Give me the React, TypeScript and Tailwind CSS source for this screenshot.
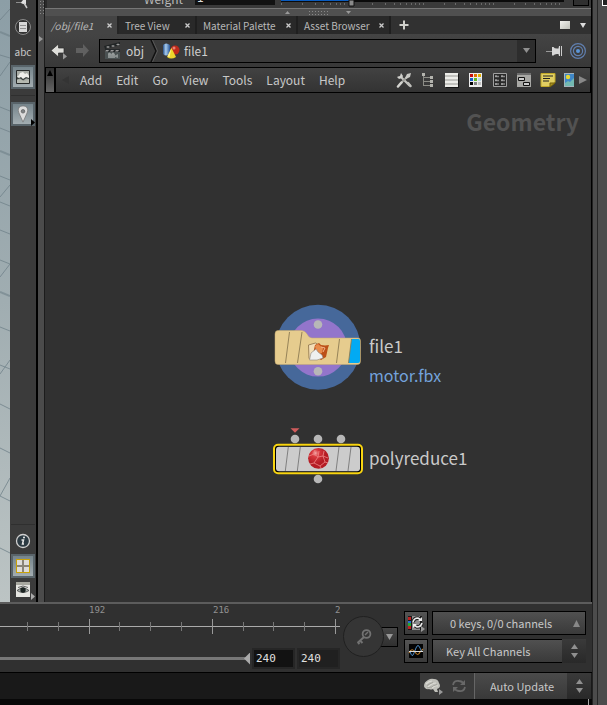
import type { ReactNode } from "react"
import { clsx } from "clsx"

const TABS = [
  { label: "/obj/file1", width: "w-[74px]" },
  { label: "Tree View", width: "w-[78px]" },
  { label: "Material Palette", width: "w-[101px]" },
  { label: "Asset Browser", width: "w-[93px]" },
]

const MENUS = ["Add", "Edit", "Go", "View", "Tools", "Layout", "Help"]

const swatches = ["#c81010", "#e07000", "#e0b000", "#1860c8", "#60b820", "#b8d8e8", "#000", "#808080", "#c0c0c0"]

const Caret = ({ dir, className = "fill-[#999]" }: { dir: "up" | "down" | "left" | "right"; className?: string }) => {
  const points = { up: "0,8 8,8 4,0", down: "0,0 8,0 4,8", left: "8,0 8,8 0,4", right: "0,0 8,4 0,8" }[dir]
  return (
    <svg viewBox="0 0 8 8" preserveAspectRatio="none" className={clsx("shrink-0", className)}>
      <polygon points={points} />
    </svg>
  )
}

const Stepper = () => (
  <span className="pointer-events-none absolute inset-y-0 right-0 flex w-6 flex-col items-center justify-center gap-1 bg-gradient-to-b from-[#3a3a3a] to-[#292929]">
    <Caret dir="up" className="h-[5px] w-[7px] fill-[#909090]" />
    <Caret dir="down" className="h-[5px] w-[7px] fill-[#909090]" />
  </span>
)

function ToolButton({ label, active, children }: { label: string; active?: boolean; children: ReactNode }) {
  return (
    <button
      aria-label={label}
      className={clsx(
        "flex h-6 w-6 shrink-0 items-center justify-center",
        active && "border-2 border-[#59646a] bg-gradient-to-b from-[#76858c] to-[#a3adb1]"
      )}
    >
      {children}
    </button>
  )
}

function Viewport() {
  return (
    <svg viewBox="0 0 10 602" preserveAspectRatio="none" className="h-full w-[10px] shrink-0" aria-hidden="true">
      <defs>
        <linearGradient id="sky" x2="0" y2="1">
          <stop offset="0" stopColor="#8c9ea6" />
          <stop offset="0.5" stopColor="#a0adb1" />
          <stop offset="1" stopColor="#bcc4c4" />
        </linearGradient>
      </defs>
      <path fill="url(#sky)" d="M0 0h10v602H0z" />
      <g stroke="#72838b" fill="none" opacity=".8">
        <path d="M0 20L10 9M0 55l10 3M0 76L10 62M0 107l10 4M0 128l10 4M0 197L10 185M0 176l10 4M0 202l10 4M0 230l10 4M0 260l10 4M0 277L10 264M0 327l10 4M0 365l10 4M0 374L10 360M0 404l10 5M0 448l10 5" />
        <path strokeWidth="2" d="M0 32l10 4M0 151l10 4M0 292l10 4" opacity=".8" />
        <path d="M10 478L0 496l10 5M0 548l10 5" />
      </g>
    </svg>
  )
}

function DisplayToolbar() {
  return (
    <aside className="flex w-[26px] shrink-0 flex-col items-center bg-[#3b3b3b]">
      <button aria-label="Select" className="h-[15px] w-6">
        <svg viewBox="0 0 24 15" className="block h-[15px] w-6">
          <path d="M5 2.500h5l2-2.500h3v4h-3l-2-1H5z" fill="#e0e0e0" />
          <path d="M13 3l3 5" stroke="#ccc" strokeWidth="1.500" />
        </svg>
      </button>
      <div className="flex flex-col items-center gap-px">
        <ToolButton label="Shading list">
          <svg viewBox="0 0 20 20" className="h-5 w-5 shrink-0">
            <circle cx="10" cy="10" r="7.500" fill="#333" stroke="#8a8a8a" />
            <path d="M6 5h8v10H6z" fill="#d8d8d8" />
            <path d="M7 8.500h6M7 11.500h6" stroke="#909090" />
          </svg>
        </ToolButton>
        <button className="h-6 w-6 text-[10px] leading-6 text-[#c8c8c8]">abc</button>
        <ToolButton label="Background image" active>
          <svg viewBox="0 0 16 16" className="h-4 w-4 shrink-0">
            <path d="M1.500 1.500h13v13h-13z" fill="#a8aca6" stroke="#282b2b" />
            <path d="M2 8l2-2 1-2 3-1 2 2 2-1 2 3v3l-4-1-2 2-3-2-3 1z" fill="#eeeeea" />
            <path d="M2 8l2 1 2-1 2 2 3-2 3 1v1l-3-.5-3 2-3-2-3 1z" fill="#3a403e" />
            <path d="M2 11l4-.5 3 2 5-2v3.500H2z" fill="#b6bab2" />
          </svg>
        </ToolButton>
      </div>
      <div className="mt-[6px] h-px w-6 bg-[#2f2f2f]" />
      <div className="relative mt-1.5">
        <ToolButton label="Marker" active>
          <svg viewBox="0 0 14 20" className="h-[18px] w-3.5 shrink-0">
            <path d="M7 19L3 10C0 4 3 1 7 1s7 3 4 9z" fill="#dcdcdc" stroke="#747474" strokeWidth=".8" />
            <circle cx="7" cy="7" r="2" fill="#808486" stroke="#555" strokeWidth=".7" />
          </svg>
        </ToolButton>
        <Caret dir="right" className="absolute right-0 bottom-0 h-[7px] w-1 fill-black" />
      </div>
      <div className="mt-auto h-px w-6 bg-[#2f2f2f]" />
      <button aria-label="Info" className="mt-1.5 flex h-5 w-6 items-center justify-center">
        <svg viewBox="0 0 16 16" className="h-4 w-4">
          <circle cx="8" cy="8" r="6.500" fill="#2c3a42" stroke="#d0d0d0" strokeWidth="1.300" />
          <path d="M6.500 7h2l-1 4h1.500" stroke="#e8e8e8" strokeWidth="1.500" fill="none" />
          <circle cx="9" cy="4.500" r="1" fill="#eee" />
        </svg>
      </button>
      <div className="mt-[3px]">
        <ToolButton label="Quad view" active>
          <svg viewBox="0 0 14 14" shapeRendering="crispEdges" className="h-3.5 w-3.5 shrink-0">
            <path d="M0 0h14v14H0z" fill="#c9a106" />
            <path d="M1 1h12v12H1z" fill="#8a8478" />
            <path d="M1 1h5v5H1zM8 1h5v5H8zM1 8h5v5H1zM8 8h5v5H8z" fill="#dfdcd8" />
          </svg>
        </ToolButton>
      </div>
      <div className="relative mt-1 mb-1 flex w-6 justify-center">
        <button aria-label="Display options">
          <svg viewBox="0 0 16 16" className="block h-4 w-4">
            <path d="M1 0h14v15H1z" fill="#e6e6e2" />
            <path d="M1 0h14v3H1z" fill="#a8a8a0" />
            <path d="M2 8.500q6-5 12 0-6 4-12 0z" fill="#a8b0ac" stroke="#444" strokeWidth=".8" />
            <circle cx="8" cy="8" r="2.700" fill="#1c2422" />
            <path d="M3 5.500q5-3 10 0" stroke="#666" fill="none" />
          </svg>
        </button>
        <Caret dir="right" className="absolute right-0 -bottom-0.5 h-[7px] w-1 fill-[#aaa]" />
      </div>
    </aside>
  )
}

function ParameterStrip() {
  return (
    <div className="flex h-2 shrink-0 items-end overflow-hidden border-l-2 border-[#2a2a2a] bg-[#3a3a3a] text-xs text-[#b8b8b8]">
      <label htmlFor="weight" className="mb-px w-[148px] pr-3 text-right leading-4">Weight</label>
      <input id="weight" defaultValue="1" className="mb-[3px] h-4 w-20 bg-[#121212] px-0.5 text-[#ddd]" />
      <svg viewBox="0 0 290 8" className="ml-1.5 h-2 w-[290px] shrink-0">
        <path d="M0 0h283v2H0z" fill="#0b0b0b" />
        <path d="M0 0h68v1H0z" fill="#0a5cc0" />
        <path
          d="M.5 3v2M21.500 3v2M34.500 3v2M42.500 3v2M49.500 3v2M55.500 3v2M59.500 3v2M63.500 3v2M91.500 3v2M104.500 3v2M113.500 3v2M119.500 3v2M125.500 3v2M130.500 3v2M134.500 3v2M138.500 3v2M142.500 3v2M163.500 3v2M174.500 3v2M183.500 3v2M189.500 3v2M195.500 3v2M200.500 3v2M204.500 3v2M208.500 3v2M212.500 3v2M233.500 3v2M244.500 3v2M253.500 3v2M259.500 3v2M265.500 3v2M270.500 3v2M274.500 3v2M278.500 3v2"
          stroke="#6a6a6a"
        />
        <path d="M68 0h5v6h-5z" fill="#8b8b8b" stroke="#111" />
      </svg>
      <div className="mr-0.5 mb-0.5 ml-auto h-2 w-4 border border-black bg-[#303030]" />
    </div>
  )
}

function Tabs() {
  return (
    <div className="flex h-[18px] shrink-0 items-stretch bg-[#313131]">
      {TABS.map((tab, i) => (
        <div
          key={tab.label}
          className={clsx(
            "flex shrink-0 items-center justify-between border-r-2 pr-[5px] pl-1.5 text-[10px] text-[#b8b8b8]",
            tab.width,
            i === 0 ? "border-[#252525] bg-[#444] italic" : "border-[#1f1f1f] bg-[#292929]"
          )}
        >
          <button className="whitespace-nowrap">{tab.label}</button>
          <button aria-label={`Close ${tab.label}`}>
            <svg viewBox="0 0 5 5" className="h-[5px] w-[5px]">
              <path d="M.5.5l4 4m0-4l-4 4" stroke="#ccc" strokeWidth="1.300" />
            </svg>
          </button>
        </div>
      ))}
      <button aria-label="New tab" className="ml-2 flex items-center">
        <svg viewBox="0 0 10 10" className="h-2.5 w-2.5">
          <path d="M5 .5v9M.5 5h9" stroke="#cfcfca" strokeWidth="2" />
        </svg>
      </button>
      <button aria-label="Maximize pane" className="my-auto ml-auto h-2 w-2.5 bg-gradient-to-br from-[#f2f2ee] to-[#bfc0b8]" />
      <button aria-label="Pane menu" className="mr-[5px] ml-2.5 flex items-center">
        <Caret dir="down" className="h-[5px] w-1.5 fill-[#ddd]" />
      </button>
    </div>
  )
}

function PathBar() {
  return (
    <nav className="flex h-[33px] shrink-0 items-center bg-gradient-to-b from-[#444] to-[#383838] pr-[5px] pl-1.5">
      <button aria-label="Back">
        <svg viewBox="0 0 18 18" className="block h-[18px] w-[18px]">
          <path d="M0 8.500L7.500 2v4H13v5H7.500v4z" fill="#dededa" stroke="#292929" strokeWidth=".7" />
          <path d="M12 11l4 3.500-4 3z" fill="#999" />
        </svg>
      </button>
      <button aria-label="Forward" className="ml-1.5">
        <svg viewBox="0 0 18 18" className="block h-[18px] w-[18px]">
          <path d="M14 8.500L8 2v4H1v5h7v4z" fill="#606060" />
        </svg>
      </button>
      <div className="ml-1.5 flex h-6 flex-1 items-center border border-black bg-[#3a3a3a] text-xs text-[#cecece]">
        <button className="flex items-center gap-1 pl-1">
          <svg viewBox="0 0 18 18" className="h-[18px] w-[18px]">
            <path d="M1 7h15v10H1z" fill="#4a5152" />
            <path d="M0 4l16-4v3L1 7z" fill="#202425" />
            <path d="M1 7h15v3H1z" fill="#24282a" />
            <path d="M2 5l2-1 2 1-2 1zM7 4l2-1 2 1-2 1zM12 2.500l2-1 2 1-2 1zM2 8h3l-1 1.500H1zM7 8h3l-1 1.500H6zM12 8h3l-1 1.500h-3z" fill="#999" />
            <path d="M4 12h7v4H4zM11 13.500l3-1.500v4l-3-1" fill="#8a9090" />
            <circle cx="5.500" cy="12" r="1.500" fill="#959a9a" />
            <circle cx="9" cy="12" r="1.500" fill="#959a9a" />
          </svg>
          obj
        </button>
        <svg viewBox="0 0 8 22" className="ml-1.5 h-[22px] w-2">
          <path d="M1 0l5 11-5 11" fill="none" stroke="#111" strokeWidth="1.500" />
          <path d="M2.500 0l5 11-5 11" fill="none" stroke="#666" strokeWidth=".7" />
        </svg>
        <button className="ml-1 flex items-center gap-1">
          <svg viewBox="0 0 18 18" className="h-[18px] w-[18px]">
            <defs>
              <linearGradient id="tube">
                <stop stopColor="#28528d" />
                <stop offset=".4" stopColor="#a8cced" />
                <stop offset="1" stopColor="#275599" />
              </linearGradient>
            </defs>
            <path d="M1 3q3-3 7 0v9q-4 3-7 0z" fill="url(#tube)" />
            <circle cx="13" cy="8" r="4.500" fill="#bd291b" />
            <circle cx="12" cy="6" r="1.500" fill="#e88270" />
            <path d="M9.500 6l4.500 9q-5 3-9 0z" fill="#edd52b" />
            <path d="M9.500 6l-2 9-2-.5z" fill="#fff19a" />
          </svg>
          file1
        </button>
        <button aria-label="Path history" className="ml-auto flex h-full w-[18px] items-center justify-center bg-[#2d2d2d]">
          <Caret dir="down" className="h-[5px] w-[7px] fill-[#909090]" />
        </button>
      </div>
      <button aria-label="Pin" className="ml-2.5">
        <svg viewBox="0 0 18 16" className="block h-4 w-[18px]">
          <path d="M0 8.500h6" stroke="#999" />
          <path d="M6 4h1.500q1 2 5 1.500L13 3h1v10h-1l-.5-2q-4-.5-5 1.500H6z" fill="#d6d6d6" />
          <path d="M15 3h1v10h-1z" fill="#ccc" />
        </svg>
      </button>
      <button aria-label="Link" className="ml-1.5">
        <svg viewBox="0 0 16 16" fill="none" className="block h-4 w-4">
          <circle cx="8" cy="8" r="7.400" stroke="#607faf" strokeWidth="1.200" />
          <circle cx="8" cy="8" r="4.600" stroke="#607faf" strokeWidth="1.200" />
          <circle cx="8" cy="8" r="2" fill="#5b96da" />
        </svg>
      </button>
    </nav>
  )
}

const NETWORK_TOOLS: { label: string; icon: ReactNode }[] = [
  {
    label: "Tools",
    icon: (
      <>
        <path d="M5 5l9 9" stroke="#c4c4c0" strokeWidth="2.200" />
        <path d="M12 4l-9 9" stroke="#a0a09c" strokeWidth="1.800" />
        <path d="M1 5l2 2 3-1 1-2-2-3-1 3-2 .5z" fill="#d0d0cc" />
        <path d="M15 1l-4 1-2 4 1 1 4-2z" fill="#c8c8c4" />
        <path d="M2 14.500l3.500-4" stroke="#d4d4d0" strokeWidth="2.500" strokeLinecap="round" />
        <path d="M12 11l2.500 3" stroke="#c0c0bc" strokeWidth="2.500" strokeLinecap="round" />
      </>
    ),
  },
  {
    label: "Tree",
    icon: (
      <>
        <path d="M3.500 3v11M4 5.500h8M4 9.500h8M4 13.500h8" stroke="#8c8c86" fill="none" />
        <path d="M2 1h3v3H2zM10 4h3v3h-3zM10 8h3v3h-3zM10 12h3v3h-3z" fill="#b4b4ae" />
      </>
    ),
  },
  {
    label: "List",
    icon: (
      <>
        <path d="M2 2h13v14H2z" fill="#171717" />
        <path d="M1 1h13v14H1z" fill="#c2c2be" />
        <path d="M1 1h13v2H1zM1 5h13v2H1zM1 9h13v2H1zM1 13h13v2H1z" fill="#ecece8" />
      </>
    ),
  },
  {
    label: "Palette",
    icon: (
      <>
        <path d="M1 1h13v14H1z" fill="#ededed" />
        {swatches.map((c, i) => (
          <rect key={c} x={2 + (i % 3) * 4} y={2 + Math.floor(i / 3) * 4} width="3" height="3" fill={c} />
        ))}
      </>
    ),
  },
  {
    label: "Grid",
    icon: (
      <>
        <path d="M1.500 1.500h13v13h-13z" fill="#292929" stroke="#a0a0a0" />
        <path d="M3 4.500h4M9 4.500h4M3 8.500h4M9 8.500h4M3 12h4M9 12h4" stroke="#888" strokeWidth="1.500" />
        <path d="M3 4h2M9 4h2M3 8h2M9 8h2M3 12h2M9 12h2" stroke="#bbb" />
      </>
    ),
  },
  {
    label: "Boxes",
    icon: (
      <>
        <path d="M1 1h14v14H1z" fill="#a8a8a5" />
        <path d="M1 1h14v2H1z" fill="#6d6d6d" />
        <path d="M2.500 5.500h6v3h-6zM7.500 10.500h6v3h-6z" fill="#ccc" stroke="#111" />
      </>
    ),
  },
  {
    label: "Note",
    icon: (
      <>
        <path d="M1 1.500h14v9l-5 4H1z" fill="#e1cf62" stroke="#c0a828" />
        <path d="M3 4h10M3 6.500h7M3 9h6" stroke="#222" strokeWidth="1.200" />
        <path d="M10 15v-4h5z" fill="#a99020" stroke="#725f08" />
      </>
    ),
  },
]

function MenuBar() {
  return (
    <div className="flex h-[26px] shrink-0 items-stretch border border-black bg-gradient-to-b from-[#424242] to-[#333]">
      <button
        aria-label="Collapse"
        className="flex w-2.5 justify-center border-r-2 border-black bg-gradient-to-b from-[#303030] to-[#666] pt-0.5"
      >
        <Caret dir="up" className="h-1.5 w-1.5 fill-black" />
      </button>
      <Caret dir="left" className="my-auto ml-1.5 h-2 w-[7px] fill-[#343434]" />
      <div className="ml-[11px] flex items-center gap-3.5 text-xs text-[#c8c8c8]">
        {MENUS.map((m) => (
          <button key={m}>{m}</button>
        ))}
      </div>
      <div className="ml-auto flex items-center gap-2">
        {NETWORK_TOOLS.map((tool) => (
          <button key={tool.label} aria-label={tool.label}>
            <svg viewBox="0 0 16 16" fill="none" className="block h-4 w-4">
              {tool.icon}
            </svg>
          </button>
        ))}
        <button aria-label="Backdrop image">
          <svg viewBox="0 0 10 16" className="block h-4 w-2.5">
            <path d="M0 1h10v14H0z" fill="#a5b5bd" />
            <path d="M1 2h9v12H1z" fill="#3f87c8" />
            <circle cx="4" cy="5" r="2.200" fill="#e8d830" />
            <path d="M1 11l3-2 2 1 4-4v8H1z" fill="#73b9b1" />
          </svg>
        </button>
      </div>
      <button aria-label="More tools" className="mr-[3px] ml-[5px] flex items-center">
        <Caret dir="right" className="h-2 w-2 fill-[#888]" />
      </button>
    </div>
  )
}

function FileNode() {
  return (
    <div className="absolute top-[207px] left-[225px] flex gap-[3px]">
      <svg viewBox="270 300 96 94" className="h-[94px] w-24 shrink-0">
        <circle cx="318" cy="347.300" r="42.500" fill="#46689a" />
        <circle cx="318" cy="347.600" r="29" fill="#9375cb" />
        <g fill="#b7b7b7">
          <circle cx="318" cy="324.500" r="4.300" />
          <circle cx="318" cy="371.300" r="4.300" />
        </g>
        <path
          d="M278 330.500h23q4 0 6 3.500 2 4 5 4h46q2.500 0 2.500 3v20q0 3.500-3 3.500H278q-3 0-3-3.500v-27q0-3.500 3-3.500z"
          fill="#e6cc8e"
          stroke="#c5aa70"
          strokeWidth=".5"
        />
        <path d="M351.500 339h7q1.500 0 1.500 2v20q0 2-2 2h-9.500z" fill="#02aaf3" />
        <path d="M289.500 332l-4 31M302 332l-4.500 31M339.500 339l-3 24M351.500 339l-3 24" stroke="#8c7a52" strokeWidth=".9" />
        <path d="M308.500 345l7-2 2.500 1.500-3 6-4 9-2-1z" fill="#f3dfb8" stroke="#8a7048" strokeWidth=".8" />
        <path d="M315 345l4-2 2 2 4 .5 4-.5-1 3-2 9-5 3-8-6z" fill="#bc5018" />
        <path d="M315 346l3-2 5 4-1 5-5 1z" fill="#e88c4c" />
        <path d="M321 347l4 1-2 4" stroke="#f3b48a" fill="none" />
        <path d="M309.500 360l1.500-7 5-4 2 3 4 3 1 3-6 2z" fill="#eef0f0" stroke="#8e8880" strokeWidth=".6" />
      </svg>
      <div className="mt-[31px] text-[17px] leading-[30px] text-[#cacaca]">
        <div>file1</div>
        <div className="text-base leading-[28px] text-[#74a3dc]">motor.fbx</div>
      </div>
    </div>
  )
}

function PolyReduceNode() {
  return (
    <div className="absolute top-[333px] left-[225px] flex gap-[3px]">
      <svg viewBox="270 426 96 60" className="h-[60px] w-24 shrink-0">
        <defs>
          <radialGradient id="ball" cx=".35" cy=".25">
            <stop stopColor="#f4a8a8" />
            <stop offset=".35" stopColor="#d8383e" />
            <stop offset="1" stopColor="#b41c24" />
          </radialGradient>
        </defs>
        <path d="M290.500 428.300h9l-4.500 4.500z" fill="#d05c5c" />
        <g fill="#b7b7b7">
          <circle cx="295" cy="439" r="4.300" />
          <circle cx="318" cy="439" r="4.300" />
          <circle cx="341" cy="439" r="4.300" />
          <circle cx="318" cy="479" r="4.300" />
        </g>
        <rect x="274" y="444.700" width="88" height="28.600" rx="4" fill="#000" stroke="#f9d510" strokeWidth="2" />
        <rect x="276" y="446.700" width="84" height="24.600" rx="3" fill="#cccccc" />
        <path d="M288.300 447l-3 24M300.300 447l-3 24M339 447l-3 24M351 447l-3 24" stroke="#777" strokeWidth=".9" />
        <circle cx="318.500" cy="458.300" r="10.400" fill="url(#ball)" />
        <path
          d="M318 457l-4 6 6 3 5-4-2-6zM323 456l5 2M325 462l3 1M320 466l1 2M314 463l-4 1M318 457l-4-3-5 2M318 457l1-6M323 456l1-5M314 454l1-4"
          stroke="#f08686"
          strokeWidth=".8"
          fill="none"
        />
      </svg>
      <div className="mt-[17px] text-[17px] leading-[30px] text-[#cacaca]">polyreduce1</div>
    </div>
  )
}

function NetworkPane() {
  return (
    <section className="flex min-w-0 flex-1 flex-col">
      <ParameterStrip />
      <div className="flex h-2 shrink-0 items-center justify-center gap-[18px] border-t border-[#777] bg-[#505050]">
        <Caret dir="up" className="h-[3px] w-[5px] fill-[#999]" />
        <div className="h-[5px] w-5 bg-[radial-gradient(#888_1px,transparent_1px)] bg-[size:3px_3px]" />
        <Caret dir="down" className="h-[3px] w-[5px] fill-[#999]" />
      </div>
      <Tabs />
      <PathBar />
      <MenuBar />
      <div className="relative flex-1 overflow-hidden bg-[#313131]">
        <h1 className="mt-3 mr-3 text-right text-[23px] leading-8 font-bold text-[#525252]">Geometry</h1>
        <FileNode />
        <PolyReduceNode />
      </div>
    </section>
  )
}

function Timeline() {
  const ticks = Array.from({ length: 11 }, (_, i) => Math.round(27 + i * 30.800))
  return (
    <div className="flex min-w-0 flex-1 flex-col">
      <div className="flex h-11 justify-end overflow-hidden">
        <svg viewBox="0 0 340 44" className="h-11 w-[340px] shrink-0">
          <path d="M0 22.500h340" stroke="#aaa" />
          {ticks.map((x, i) => (
            <path key={x} d={i % 4 === 2 ? `M${x}.5 15v15` : `M${x}.5 18v9`} stroke={i % 4 === 2 ? "#999" : "#777"} />
          ))}
          <g className="fill-[#929292] font-['DejaVu_Sans_Mono',monospace] text-[9px]">
            <text x="89" y="9">192</text>
            <text x="213" y="9">216</text>
            <text x="335" y="9">2</text>
          </g>
        </svg>
      </div>
      <div className="flex items-center">
        <input
          type="range"
          aria-label="Frame range"
          defaultValue={100}
          className="h-[3px] min-w-0 flex-1 appearance-none bg-[#777] [&::-webkit-slider-thumb]:h-3 [&::-webkit-slider-thumb]:w-1.5 [&::-webkit-slider-thumb]:appearance-none [&::-webkit-slider-thumb]:bg-[#aaa] [&::-webkit-slider-thumb]:[clip-path:polygon(100%_0,100%_100%,0_50%)]"
        />
        <input
          aria-label="Range end"
          defaultValue="240"
          className="ml-0.5 h-[21px] w-[43px] border-2 border-[#262626] bg-[#121212] px-0.5 font-['DejaVu_Sans_Mono',monospace] text-[11px] text-[#e0e0e0]"
        />
        <input
          aria-label="Global end"
          defaultValue="240"
          className="ml-0.5 h-[21px] w-[43px] border-2 border-[#262626] bg-[#202020] px-0.5 font-['DejaVu_Sans_Mono',monospace] text-[11px] text-[#e0e0e0]"
        />
      </div>
    </div>
  )
}

function PlayBar() {
  return (
    <section className="flex h-[71px] shrink-0 border-t-2 border-b border-t-[#5c5c5c] border-b-black bg-[#303030]">
      <Timeline />
      <div className="mt-3 ml-[3px] flex shrink-0 items-center self-start">
        <button
          aria-label="Set key"
          className="z-10 flex h-[41px] w-[41px] items-center justify-center rounded-full border border-[#202020] bg-[#353535]"
        >
          <svg viewBox="0 0 16 16" fill="none" stroke="#727272" className="h-4 w-4">
            <circle cx="10.500" cy="5" r="3.900" strokeWidth="1.800" />
            <path d="M8 8l-6.500 6M4 11.500l2.500 2.500M2 13.500l1.500 1.500" strokeWidth="2" />
            <path d="M9 6l3-3" strokeWidth="1.500" />
          </svg>
        </button>
        <button
          aria-label="Key options"
          className="-ml-1 flex h-5 w-[18px] items-center justify-center border border-black bg-gradient-to-b from-[#464646] to-[#303030]"
        >
          <Caret dir="down" className="h-[6px] w-[7px] fill-[#999]" />
        </button>
      </div>
      <div className="mt-[7px] ml-1.5 flex flex-col gap-1">
        <button
          aria-label="Scoped channels"
          className="flex h-6 w-6 items-center justify-center border border-black bg-gradient-to-b from-[#555] to-[#3a3a3a]"
        >
          <svg viewBox="0 0 18 18" fill="none" className="h-[18px] w-[18px] shrink-0">
            <path d="M1 2h14v14H1z" fill="#1a1a1a" />
            <path d="M1 3h3v3H1z" fill="#c02020" />
            <path d="M1 7h3v2H1z" fill="#286bd0" />
            <path d="M1 9h3v3H1z" fill="#25aa35" />
            <path d="M1 12h3v3H1z" fill="#c02020" />
            <path d="M5 2h8v14H5z" fill="#8e8e8e" />
            <path d="M6 8q1-4 5-4l3 2M15 9q-1 4-5 4l-3-2" stroke="#222" strokeWidth="3.500" />
            <path d="M6 8q1-4 5-4l3 2M15 9q-1 4-5 4l-3-2" stroke="#eee" strokeWidth="1.600" />
            <path d="M15 3v4h-4zM6 14v-4h4z" fill="#eee" />
            <path d="M14 12l4 3-4 3z" fill="#999" />
          </svg>
        </button>
        <button
          aria-label="Animation curves"
          className="flex h-6 w-6 items-center justify-center border border-black bg-gradient-to-b from-[#555] to-[#3a3a3a]"
        >
          <svg viewBox="0 0 16 16" fill="none" className="h-4 w-4 shrink-0">
            <path d="M1 1h14v14H1z" fill="#030303" />
            <path d="M1 10q3-6 6-1t5 0l3-3" stroke="#b87a28" strokeWidth="1.200" />
            <path d="M2 8q2 8 4 2l2-5q2-5 4 0l2 4" stroke="#4a88c0" />
            <path d="M1 8.500h14" stroke="#ddd" />
          </svg>
        </button>
      </div>
      <div className="mt-[7px] mr-1.5 ml-1 flex w-[154px] shrink-0 flex-col gap-1 text-[11px] text-[#c8c8c8]">
        <button className="flex h-6 items-center justify-between border border-black bg-gradient-to-b from-[#505050] to-[#3a3a3a] pr-[5px] pl-[17px]">
          0 keys, 0/0 channels
          <Caret dir="up" className="h-[7px] w-[7px] fill-[#888]" />
        </button>
        <div className="relative h-6">
          <select
            aria-label="Key mode"
            className="h-full w-full appearance-none border border-black bg-gradient-to-b from-[#505050] to-[#3a3a3a] pr-6 pl-[13px]"
          >
            <option>Key All Channels</option>
          </select>
          <Stepper />
        </div>
      </div>
    </section>
  )
}

function StatusBar() {
  return (
    <footer className="flex h-[26px] shrink-0 justify-end bg-[#191919] pr-px text-[11px] text-[#c8c8c8]">
      <div className="flex items-center bg-[#3a3a3a] pl-1">
        <button aria-label="Cook status">
          <svg viewBox="0 0 20 20" className="block h-5 w-5">
            <path d="M0 10q0-4 4-6 3-2 6-1 4 0 5 4 2 3 0 5l-2 1 1 3h-3l-2-3q-2 1-4 0-2 1-4-1-1-1-1-2z" fill="#c0c0ba" />
            <path d="M2 8q3-3 6-3M4 11q4-4 8-4M8 12q3-3 6-2" stroke="#dcdcd6" strokeWidth="1.200" fill="none" />
            <path d="M3 9.500q3-2 6-3M7 11.500q2-2 6-3M3 12l4-1" stroke="#8d8d87" strokeWidth=".6" fill="none" />
            <path d="M15 13l4 3-4 3z" fill="#999" />
          </svg>
        </button>
        <button aria-label="Recook" className="mx-[7px]">
          <svg viewBox="0 0 16 16" fill="none" stroke="#686868" className="block h-4 w-4">
            <path d="M2 7q1-5 6-4 3 0 5 3M14 9q-1 5-6 4-3 0-5-3" strokeWidth="1.800" />
            <path d="M14 2v5H9zM2 14V9h5z" fill="#686868" stroke="none" />
          </svg>
        </button>
        <div className="relative h-full w-[117px] border-l border-[#666]">
          <select
            aria-label="Update mode"
            className="h-full w-full appearance-none bg-gradient-to-b from-[#4b4b4b] to-[#393939] pr-6 pl-[15px]"
          >
            <option>Auto Update</option>
          </select>
          <Stepper />
        </div>
      </div>
    </footer>
  )
}

export default function App() {
  return (
    <div className="flex h-screen overflow-hidden bg-[#080808] font-['Noto_Sans_CJK_SC',sans-serif]">
      <main className="flex min-w-0 flex-1 flex-col">
        <div className="flex min-h-0 flex-1 border-r border-black">
          <Viewport />
          <DisplayToolbar />
          <div className="flex w-[9px] shrink-0 flex-col items-center border-r border-l-2 border-[#1c1c1c] border-l-black bg-[#4b4b4b]">
            <div className="h-4 w-[5px] bg-[radial-gradient(#888_1px,transparent_1px)] bg-[size:3px_3px]" />
            <Caret dir="right" className="mt-5 h-1.5 w-1 fill-[#999]" />
          </div>
          <NetworkPane />
        </div>
        <PlayBar />
        <StatusBar />
        <div className="flex h-1.5 shrink-0 justify-end bg-[#080808] pr-[3px]">
          <div className="w-px bg-[#aaa]" />
        </div>
      </main>
      <div className="flex w-[15px] shrink-0 border-l border-[#222] bg-[#4c4c4c]">
        <div className="w-[5px] border-r border-[#262626]" />
        <div className="ml-auto h-1.5 w-[5px] border-b border-l border-white bg-[#222]" />
      </div>
    </div>
  )
}
